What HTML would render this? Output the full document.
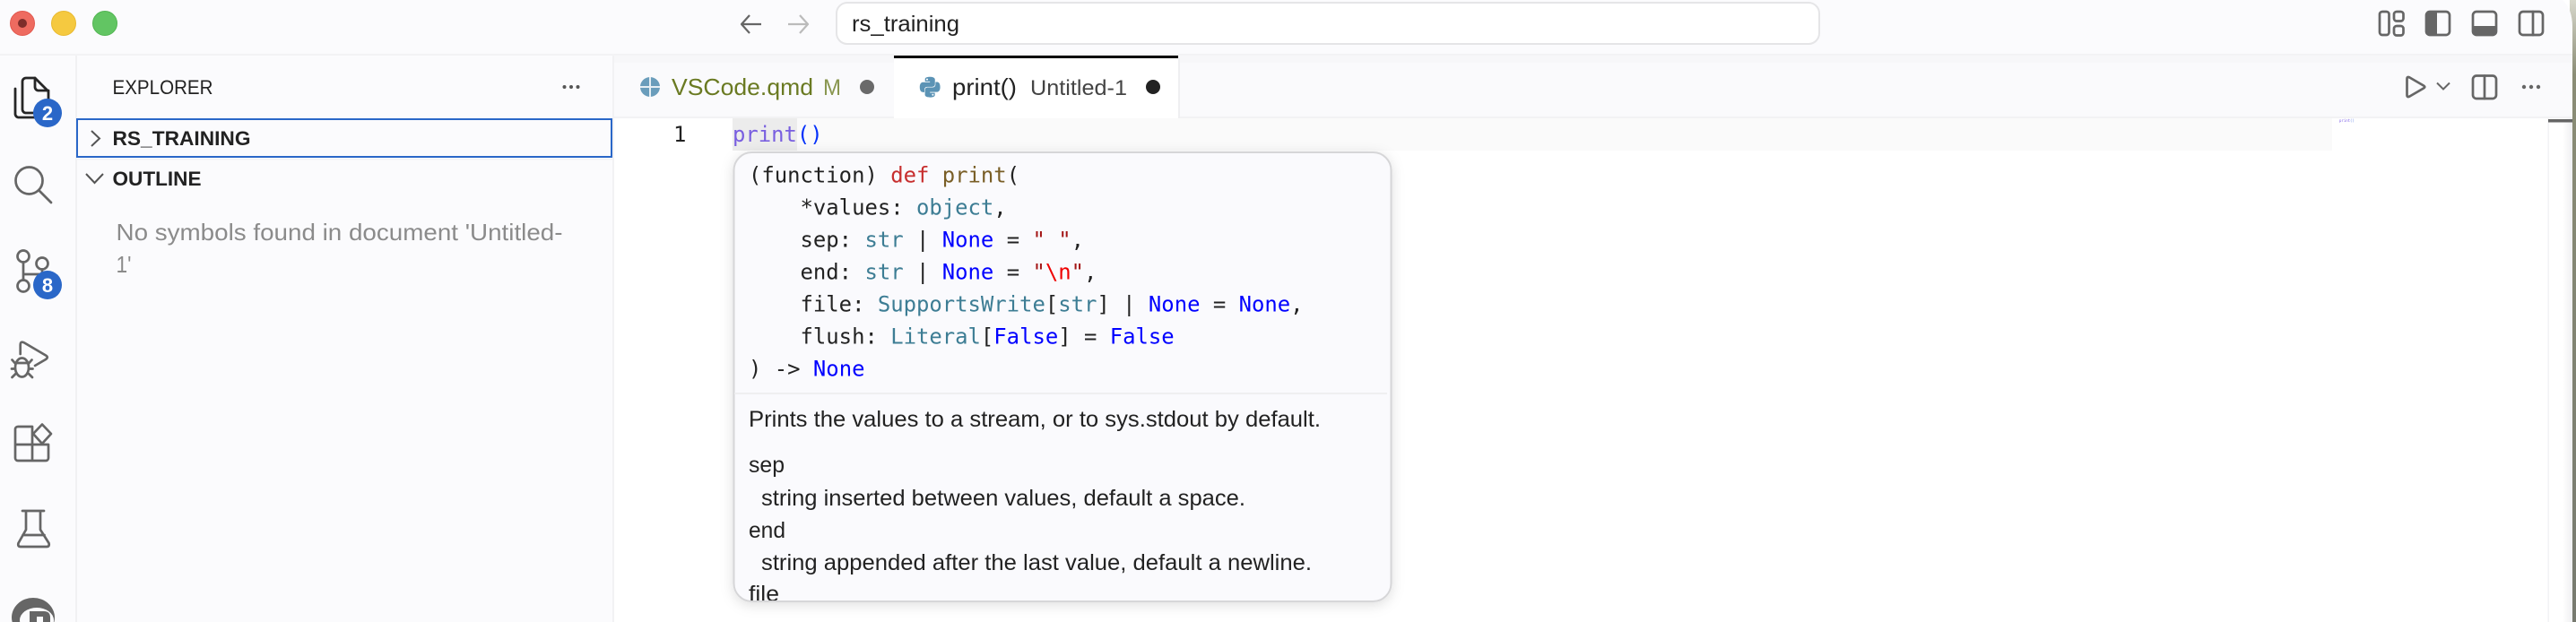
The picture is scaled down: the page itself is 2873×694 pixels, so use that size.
<!DOCTYPE html>
<html><head><meta charset="utf-8"><title>VS Code</title>
<style>
html,body{margin:0;padding:0;width:2873px;height:694px;overflow:hidden;background:#fff}
svg{display:block}
text{white-space:pre}
.s{font-family:"Liberation Sans",sans-serif;fill:#222}
.m{font-family:"DejaVu Sans Mono","Liberation Mono",monospace;font-size:23.9px;fill:#222}
.k{fill:#0000ff}.t{fill:#3d7d94}.r{fill:#a31515}
.i{fill:none;stroke:#666;stroke-width:2.7;stroke-linecap:round;stroke-linejoin:round}
</style></head><body>
<svg width="2873" height="694" viewBox="0 0 2873 694" xmlns="http://www.w3.org/2000/svg">
<defs>
<clipPath id="hc"><rect x="818.500" y="170" width="732" height="500" rx="19"/></clipPath>
<linearGradient id="ed" x1="0" x2="1" y1="0" y2="0"><stop offset="0" stop-color="#fff"/><stop offset=".6" stop-color="#fff"/><stop offset="1" stop-color="#efeff1"/></linearGradient>
<linearGradient id="dk" x1="0" x2="0" y1="0" y2="1"><stop offset="0" stop-color="#d8d8cc"/><stop offset=".12" stop-color="#8b8d76"/><stop offset="1" stop-color="#777a70"/></linearGradient>
<filter id="sh" x="-5%" y="-5%" width="110%" height="112%"><feDropShadow dx="0" dy="3" stdDeviation="7" flood-color="#000" flood-opacity=".13"/></filter>
</defs>

<rect width="2873" height="694" fill="#fff"/>
<rect x="2866" width="7" height="694" fill="url(#dk)"/>
<path d="M0 0H2858Q2869 10 2869 30V694H0Z" fill="#fbfbfd"/>

<!-- title bar -->
<rect y="60" width="2869" height="2" fill="#f3f3f5"/>
<circle cx="25" cy="26" r="13.500" fill="#ee6b60" stroke="#e2584e"/><circle cx="25" cy="26" r="5" fill="#7e2d2a"/>
<circle cx="71" cy="26" r="13.500" fill="#f5c940" stroke="#e9b92f"/>
<circle cx="117" cy="26" r="13.500" fill="#62c563" stroke="#52b552"/>
<path d="M849 27H827M836 17L827 27L836 37" fill="none" stroke="#666" stroke-width="2.200" stroke-linejoin="round"/>
<path d="M879 27H901M892 17L901 27L892 37" fill="none" stroke="#bbb" stroke-width="2.200" stroke-linejoin="round"/>
<rect x="933" y="3" width="1096" height="46" rx="12" fill="#fff" stroke="#e5e5e7" stroke-width="2"/>
<text class="s" x="950" y="35" font-size="25" textLength="120" lengthAdjust="spacingAndGlyphs">rs_training</text>

<!-- title icons -->
<g class="i">
<rect x="2654" y="13" width="10.500" height="26" rx="3"/>
<rect x="2670" y="13" width="10.500" height="10.500" rx="3"/>
<rect x="2670" y="29" width="10.500" height="10.500" rx="3"/>
<rect x="2706" y="13" width="26" height="26" rx="4"/>
<rect x="2758" y="13" width="26" height="26" rx="4"/>
<rect x="2810" y="13" width="26" height="26" rx="4"/><path d="M2825 13V39"/>
</g>
<path d="M2710 13h7v26h-7a4 4 0 0 1-4-4V17a4 4 0 0 1 4-4Z" fill="#666" stroke="#666" stroke-width="2"/>
<path d="M2758 30h26v5a4 4 0 0 1-4 4h-18a4 4 0 0 1-4-4Z" fill="#666" stroke="#666" stroke-width="2"/>

<!-- activity bar + sidebar -->
<rect x="84" y="62" width="2" height="632" fill="#f1f1f3"/>
<rect x="683" y="62" width="2" height="632" fill="#f2f2f4"/>

<g fill="none" stroke="#262626" stroke-width="2.800" stroke-linejoin="round" stroke-linecap="round">
<path d="M25 122V91a4 4 0 0 1 4-4h10l15 15v20a4 4 0 0 1-4 4H29a4 4 0 0 1-4-4Z"/>
<path d="M39 87v10a4 4 0 0 0 4 4h11"/>
<path d="M17 99v28a4 4 0 0 0 4 4h22"/>
</g>
<circle cx="53" cy="126" r="16" fill="#2a67c8"/>
<text class="s" x="53" y="134" font-size="22" font-weight="700" style="fill:#fff" text-anchor="middle">2</text>

<g class="i">
<circle cx="32.500" cy="201.500" r="15"/><path d="M44 213L57 226"/>
<circle cx="26" cy="286" r="6.500"/><circle cx="47" cy="294" r="6.500"/><circle cx="26" cy="319" r="6.500"/>
<path d="M26 292.500V312.500M26 306H44Q47 306 47 303V300.500"/>
<path d="M22.700 395V385q0-5 4.500-2.500L51 396.500q3.500 2 0 4.500L39 408"/>
<ellipse cx="24.500" cy="410" rx="7.500" ry="10.500"/>
<path d="M17.500 405H31.500M13.500 401.500l3.500 4M35.500 401.500l-3.500 4M13 411.500h4M32 411.500h4.500M13.500 421l4-4M36 421l-4-4"/>
<path d="M36 476H20a3 3 0 0 0-3 3V511a3 3 0 0 0 3 3H51a3 3 0 0 0 3-3V496H17M36 476V514"/>
<path d="M47 473.500L57 484 47 495 37 484Z"/>
<path d="M25 570H49M29 571V591L20.500 606Q19.500 610 23 610H52Q55.500 610 54.500 606L45 591V571M25.500 597H49.500"/>
</g>
<circle cx="53" cy="318" r="16" fill="#2a67c8"/>
<text class="s" x="53" y="326" font-size="22" font-weight="700" style="fill:#fff" text-anchor="middle">8</text>

<ellipse cx="37" cy="689" rx="24" ry="22" fill="#666"/>
<ellipse cx="41" cy="692" rx="19" ry="14" fill="#fbfbfd"/>
<path d="M33 682H49Q56 682 56 689V694H33Z" fill="#666"/>
<rect x="41" y="688" width="7" height="6" fill="#fbfbfd"/>

<text class="s" x="125.500" y="105" font-size="22.500" textLength="112" lengthAdjust="spacingAndGlyphs">EXPLORER</text>
<g fill="#555"><circle cx="629.500" cy="97" r="2"/><circle cx="637" cy="97" r="2"/><circle cx="644.500" cy="97" r="2"/></g>

<rect x="86" y="133" width="596" height="42" fill="none" stroke="#2a67c8" stroke-width="2"/>
<path d="M102 146L111 154.500L102 163" fill="none" stroke="#555" stroke-width="2"/>
<text class="s" x="125.500" y="162" font-size="22" font-weight="700" textLength="154" lengthAdjust="spacingAndGlyphs">RS_TRAINING</text>
<rect x="85" y="177" width="598" height="1.500" fill="#f3f3f5"/>
<path d="M96 194L105.500 204L115 194" fill="none" stroke="#555" stroke-width="2"/>
<text class="s" x="125.500" y="207" font-size="22" font-weight="700" textLength="99" lengthAdjust="spacingAndGlyphs">OUTLINE</text>
<text class="s" x="129.500" y="268" font-size="26" style="fill:#8b8b8b" textLength="498" lengthAdjust="spacingAndGlyphs">No symbols found in document 'Untitled-</text>
<text class="s" x="129.500" y="304" font-size="26" style="fill:#8b8b8b" textLength="17" lengthAdjust="spacingAndGlyphs">1'</text>

<!-- tabs -->
<rect x="685" y="62" width="2184" height="70" fill="#fafafc"/>
<rect x="685" y="62" width="2184" height="8" fill="#f7f7f9"/>
<rect x="685" y="130" width="2184" height="2" fill="#f2f2f4"/>
<rect x="997" y="62" width="317" height="70" fill="#fff"/>
<rect x="997" y="62" width="317" height="3" fill="#000"/>
<rect x="1314" y="65" width="2" height="67" fill="#efeff1"/>

<circle cx="725" cy="97" r="11" fill="#6a9dbb"/>
<path d="M725 86V108M714 97H736" stroke="#e6eef3" stroke-width="2"/>
<text class="s" x="749" y="106" font-size="26" style="fill:#6a7a22" textLength="158" lengthAdjust="spacingAndGlyphs">VSCode.qmd</text>
<text class="s" x="918" y="106" font-size="25" style="fill:#89964f" textLength="20" lengthAdjust="spacingAndGlyphs">M</text>
<circle cx="967" cy="97" r="8" fill="#6a6a6a"/>

<g transform="translate(1023.500 83.500) scale(1.140)" fill="#5b93b5">
<path fill-rule="evenodd" d="M11.900 2C6.900 2 7.200 4.200 7.200 4.200v2.300h4.800v.7H5.300S2 6.800 2 12s2.900 5 2.900 5h1.700v-2.400s-.1-2.900 2.800-2.900h4.800s2.700 0 2.700-2.600V4.700S17.300 2 11.900 2zM9.200 3.600a.9.9 0 1 1 0 1.800.9.9 0 0 1 0-1.800z"/>
<path fill-rule="evenodd" transform="rotate(180 12 12)" d="M11.900 2C6.900 2 7.200 4.200 7.200 4.200v2.300h4.800v.7H5.300S2 6.800 2 12s2.900 5 2.900 5h1.700v-2.400s-.1-2.900 2.800-2.900h4.800s2.700 0 2.700-2.600V4.700S17.300 2 11.900 2zM9.200 3.600a.9.9 0 1 1 0 1.800.9.9 0 0 1 0-1.800z"/>
</g>
<text class="s" x="1062" y="106" font-size="26" style="fill:#222" textLength="72" lengthAdjust="spacingAndGlyphs">print()</text>
<text class="s" x="1149" y="106" font-size="24.500" style="fill:#444" textLength="108" lengthAdjust="spacingAndGlyphs">Untitled-1</text>
<circle cx="1286" cy="97" r="8" fill="#222"/>

<g class="i">
<path d="M2684.500 88Q2684.500 85 2687.500 86.500L2703 95.500Q2705.500 97 2703 98.500L2687.500 107.500Q2684.500 109 2684.500 106Z"/>
<rect x="2758" y="84.500" width="26" height="25.500" rx="4"/><path d="M2771 84.500V110"/>
</g>
<path d="M2718 92.500L2725 99.500L2732 92.500" fill="none" stroke="#666" stroke-width="2"/>
<g fill="#666"><circle cx="2815" cy="97" r="2.200"/><circle cx="2823" cy="97" r="2.200"/><circle cx="2831" cy="97" r="2.200"/></g>

<!-- editor -->
<rect x="685" y="132" width="2157" height="562" fill="#fff"/>
<rect x="2842" y="132" width="27" height="562" fill="url(#ed)"/>
<rect x="2841.500" y="132" width="1.500" height="562" fill="#f2f2f4"/>
<rect x="817" y="132" width="1784" height="36" fill="#fafafa"/>
<rect x="817" y="132" width="72" height="36" fill="#ececec"/>
<rect x="2842" y="133" width="27" height="3.500" fill="#666"/>
<text x="2609" y="136" font-size="4" font-family="DejaVu Sans Mono,monospace" fill="#7d60e8">print<tspan fill="#6f8ce8">()</tspan></text>

<text class="m" x="751" y="158" style="fill:#222">1</text>
<text class="m" x="817" y="158" style="fill:#795fe0">print<tspan fill="#0431fa">()</tspan></text>

<!-- hover -->
<rect x="818.500" y="170" width="733" height="501" rx="20" fill="#fafafd" stroke="#d6d6d8" stroke-width="2" filter="url(#sh)"/>
<g clip-path="url(#hc)">
<text class="m" x="835" y="203.500">(function) <tspan fill="#c72e2e">def</tspan> <tspan fill="#795e26">print</tspan>(</text>
<text class="m" x="835" y="239.500">    *values: <tspan class="t">object</tspan>,</text>
<text class="m" x="835" y="275.500">    sep: <tspan class="t">str</tspan> | <tspan class="k">None</tspan> = <tspan class="r">" "</tspan>,</text>
<text class="m" x="835" y="311.500">    end: <tspan class="t">str</tspan> | <tspan class="k">None</tspan> = <tspan class="r">"</tspan><tspan fill="#ee0000">\n</tspan><tspan class="r">"</tspan>,</text>
<text class="m" x="835" y="347.500">    file: <tspan class="t">SupportsWrite</tspan>[<tspan class="t">str</tspan>] | <tspan class="k">None</tspan> = <tspan class="k">None</tspan>,</text>
<text class="m" x="835" y="383.500">    flush: <tspan class="t">Literal</tspan>[<tspan class="k">False</tspan>] = <tspan class="k">False</tspan></text>
<text class="m" x="835" y="419.500">) -&gt; <tspan class="k">None</tspan></text>
<rect x="819" y="438" width="728" height="2" fill="#efeff1"/>
<text class="s" x="835" y="476" font-size="25" textLength="638" lengthAdjust="spacingAndGlyphs">Prints the values to a stream, or to sys.stdout by default.</text>
<text class="s" x="835" y="527" font-size="25" textLength="40" lengthAdjust="spacingAndGlyphs">sep</text>
<text class="s" x="849" y="564" font-size="25" textLength="540" lengthAdjust="spacingAndGlyphs">string inserted between values, default a space.</text>
<text class="s" x="835" y="600" font-size="25" textLength="41" lengthAdjust="spacingAndGlyphs">end</text>
<text class="s" x="849" y="636" font-size="25" textLength="614" lengthAdjust="spacingAndGlyphs">string appended after the last value, default a newline.</text>
<text class="s" x="835" y="671" font-size="25" textLength="34" lengthAdjust="spacingAndGlyphs">file</text>
</g>
</svg>
</body></html>
